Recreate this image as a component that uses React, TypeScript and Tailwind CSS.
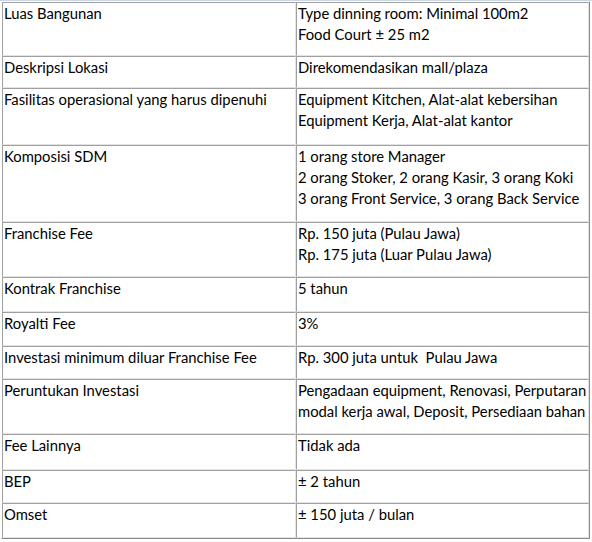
import React from "react";

type Row = { h: string; left: string; right: string[] };

const rows: Row[] = [
  { h: "h-[54px]", left: "Luas Bangunan", right: ["Type dinning room: Minimal 100m2", "Food Court ± 25 m2"] },
  { h: "h-[32px]", left: "Deskripsi Lokasi", right: ["Direkomendasikan mall/plaza"] },
  { h: "h-[57px]", left: "Fasilitas operasional yang harus dipenuhi", right: ["Equipment Kitchen, Alat-alat kebersihan", "Equipment Kerja, Alat-alat kantor"] },
  { h: "h-[77px]", left: "Komposisi SDM", right: ["1 orang store Manager", "2 orang Stoker, 2 orang Kasir, 3 orang Koki", "3 orang Front Service, 3 orang Back Service"] },
  { h: "h-[55px]", left: "Franchise Fee", right: ["Rp. 150 juta (Pulau Jawa)", "Rp. 175 juta (Luar Pulau Jawa)"] },
  { h: "h-[35px]", left: "Kontrak Franchise", right: ["5 tahun"] },
  { h: "h-[34px]", left: "Royalti Fee", right: ["3%"] },
  { h: "h-[33px]", left: "Investasi minimum diluar Franchise Fee", right: ["Rp. 300 juta untuk\u00a0 Pulau Jawa"] },
  { h: "h-[55px]", left: "Peruntukan Investasi", right: ["Pengadaan equipment, Renovasi, Perputaran", "modal kerja awal, Deposit, Persediaan bahan"] },
  { h: "h-[36px]", left: "Fee Lainnya", right: ["Tidak ada"] },
  { h: "h-[33px]", left: "BEP", right: ["± 2 tahun"] },
  { h: "h-[35px]", left: "Omset", right: ["± 150 juta / bulan"] },
];

const cell =
  "border border-t-[#a0a0a0] border-l-[#a0a0a0] border-b-[#e3e3e3] border-r-[#e3e3e3] pl-px leading-[21px] whitespace-nowrap overflow-hidden";

export default function App() {
  return (
    <div className="w-[592px] h-[542px] bg-white text-[14.8px] text-black font-['Lato',sans-serif]">
      <div className="h-px bg-[#c9d6e6]" />
      <div className="ml-px w-[589px] border border-t-white border-l-white border-r-[#8a8a8a] border-b-[#8a8a8a] grid grid-cols-[294px_293px]">
        {rows.map((r, i) => (
          <React.Fragment key={i}>
            <div className={`${cell} ${r.h}`}>{r.left}</div>
            <div className={`${cell} ${r.h}`}>
              {r.right.map((t, j) => (
                <div key={j}>{t}</div>
              ))}
            </div>
          </React.Fragment>
        ))}
      </div>
    </div>
  );
}
